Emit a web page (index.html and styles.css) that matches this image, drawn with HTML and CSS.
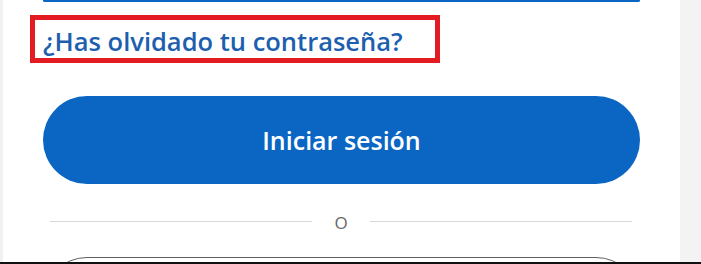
FILE: index.html
```html
<!DOCTYPE html>
<html lang="es">
<head>
    <meta charset="UTF-8">
    <meta name="viewport" content="width=device-width, initial-scale=1.0">
    <title>Iniciar sesión</title>
    <link rel="stylesheet" href="styles.css">
</head>
<body>
    <div class="screen">
        <div class="gutter gutter-left"></div>

        <main class="form">
            <div class="field-edge"></div>

            <div class="forgot-box">
                <a class="forgot-link" href="#">¿Has olvidado tu contraseña?</a>
            </div>

            <button class="btn-primary" type="button">Iniciar sesión</button>

            <div class="divider">
                <span class="divider-line"></span>
                <span class="divider-text">O</span>
                <span class="divider-line"></span>
            </div>

            <button class="btn-secondary" type="button"></button>
        </main>

        <div class="gutter gutter-right"></div>
    </div>
    <div class="frame-edge"></div>
</body>
</html>
```

FILE: styles.css
```css
body {
    margin: 0;
    padding: 0;
    height: 264px;
    overflow: hidden;
    background: #ffffff;
    font-family: "Open Sans", "Noto Sans", Arial, sans-serif;
}

.screen {
    display: flex;
    height: 262px;
    overflow: hidden;
}

/* grey side strips */
.gutter {
    flex: none;
    background: #f1f1f1;
}
.gutter-left {
    width: 3px;
}
.gutter-right {
    width: 21px;
    background: #f3f3f3;
}

.form {
    flex: 1;
    display: flex;
    flex-direction: column;
    padding: 0 40px;
    background: #ffffff;
}

/* bottom of the password input, focused */
.field-edge {
    height: 1px;
    border: 2px solid #0a66c2;
    border-top: none;
    border-radius: 0 0 8px 8px;
}

.forgot-box {
    align-self: flex-start;
    box-sizing: border-box;
    width: 410px;
    height: 48px;
    margin: 13px 0 0 -13px;
    padding: 3px 0 0 8px;
    border: 5px solid #e31b23;
}

.forgot-link {
    display: block;
    font-size: 25.5px;
    font-weight: 600;
    line-height: 36px;
    color: #1d5fae;
    text-decoration: none;
    white-space: nowrap;
}

.btn-primary {
    flex: none;
    height: 88px;
    margin-top: 33px;
    border: none;
    border-radius: 44px;
    background: #0a66c2;
    color: #ffffff;
    font-family: inherit;
    font-size: 25px;
    font-weight: 600;
    cursor: pointer;
}

.divider {
    flex: none;
    display: flex;
    align-items: center;
    gap: 22px;
    height: 20px;
    margin-top: 27px;
    padding: 0 8px 0 7px;
}

.divider-line {
    flex: 1;
    height: 1px;
    background: #d9d9d9;
}

.divider-text {
    font-size: 17px;
    line-height: 20px;
    padding-top: 4px;
    color: #666666;
}

.btn-secondary {
    flex: none;
    height: 88px;
    margin-top: 26px;
    border: 1px solid #5f5f5f;
    border-radius: 44px;
    background: #ffffff;
}

.frame-edge {
    height: 2px;
    background: #111111;
}
```
